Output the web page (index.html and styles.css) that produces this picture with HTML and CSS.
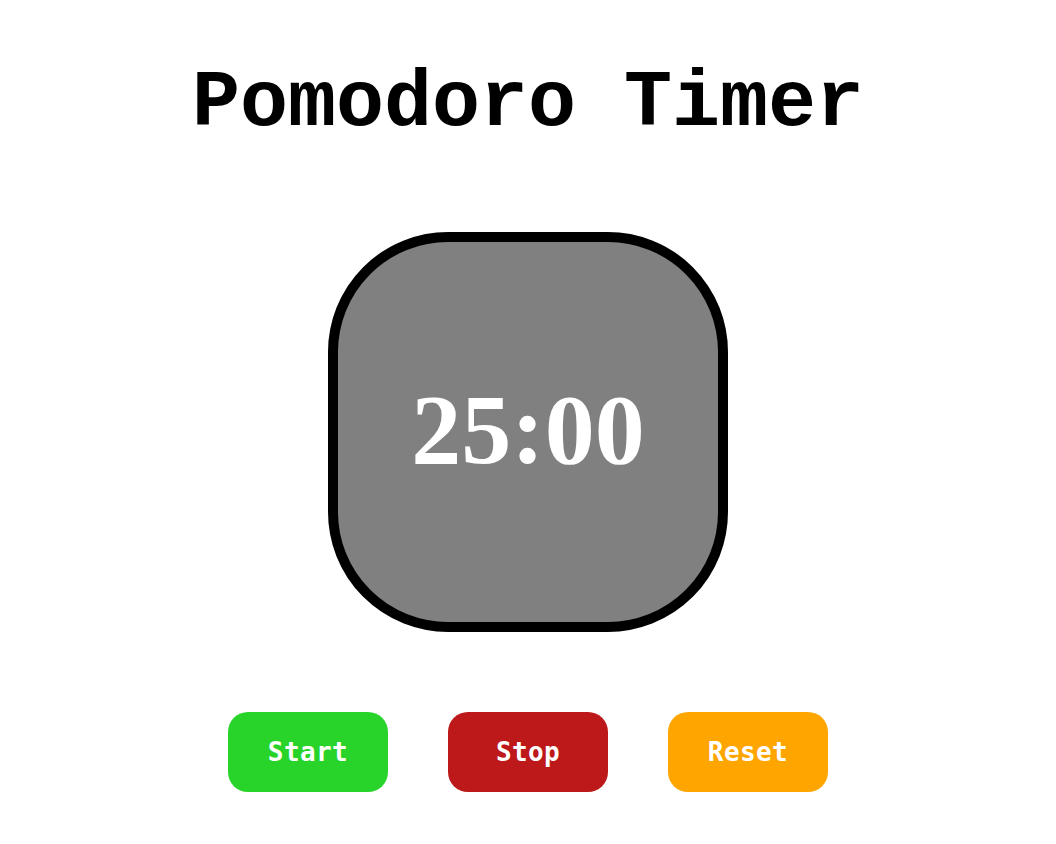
FILE: index.html
```html
<!DOCTYPE html>
<html lang="en">
<head>
<meta charset="utf-8">
<title>Pomodoro Timer</title>
<link rel="stylesheet" href="styles.css">
</head>
<body>
<main class="app">
  <h1 class="title">Pomodoro Timer</h1>
  <div class="timer"><span class="time">25:00</span></div>
  <div class="controls">
    <button class="btn btn-start">Start</button>
    <button class="btn btn-stop">Stop</button>
    <button class="btn btn-reset">Reset</button>
  </div>
</main>
</body>
</html>
```
FILE: styles.css
```css
html, body {
  margin: 0;
  padding: 0;
  background: #ffffff;
}
.app {
  display: flex;
  flex-direction: column;
  align-items: center;
  padding-top: 58px;
}
.title {
  margin: 0;
  font-family: "Liberation Mono", "Courier New", monospace;
  font-weight: bold;
  font-size: 80px;
  line-height: normal;
  color: #000;
}
.timer {
  box-sizing: border-box;
  width: 400px;
  height: 400px;
  margin-top: 83px;
  padding-bottom: 6px;
  border: 10px solid #000;
  border-radius: 120px;
  background: #808080;
  display: flex;
  align-items: center;
  justify-content: center;
}
.time {
  font-family: "Liberation Serif", "Times New Roman", serif;
  font-weight: bold;
  font-size: 100px;
  color: #fff;
}
.controls {
  display: flex;
  gap: 60px;
  margin-top: 80px;
}
.btn {
  width: 160px;
  height: 80px;
  border: none;
  border-radius: 20px;
  font-family: "DejaVu Sans Mono", monospace;
  font-weight: bold;
  font-size: 26px;
  letter-spacing: 0.4px;
  color: #fff;
  padding: 0;
}
.btn-start { background: #29d42a; }
.btn-stop { background: #bd181a; }
.btn-reset { background: #ffa500; }
```
